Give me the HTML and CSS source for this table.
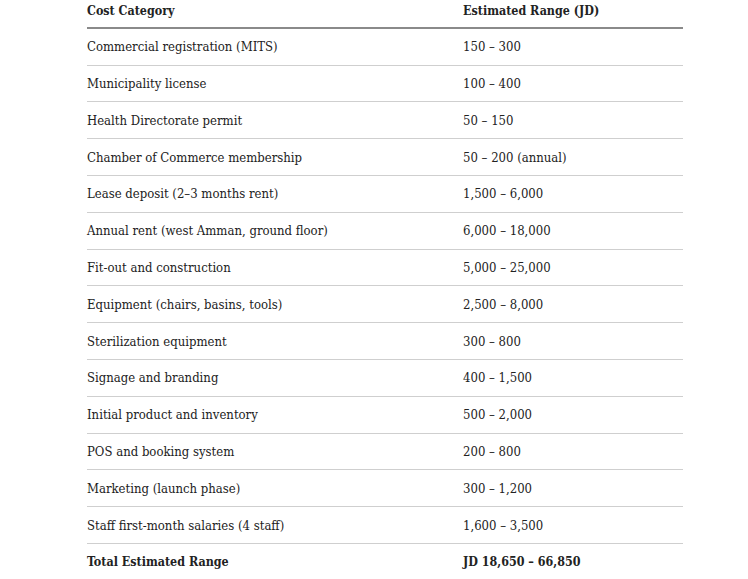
FILE: index.html
```html
<!DOCTYPE html>
<html>
<head>
<meta charset="utf-8">
<link rel="stylesheet" href="styles.css">
</head>
<body>
<table class="costs">
  <thead>
    <tr><th class="cat">Cost Category</th><th>Estimated Range (JD)</th></tr>
  </thead>
  <tbody>
    <tr><td class="cat">Commercial registration (MITS)</td><td>150 – 300</td></tr>
    <tr><td class="cat">Municipality license</td><td>100 – 400</td></tr>
    <tr><td class="cat">Health Directorate permit</td><td>50 – 150</td></tr>
    <tr><td class="cat">Chamber of Commerce membership</td><td>50 – 200 (annual)</td></tr>
    <tr><td class="cat">Lease deposit (2–3 months rent)</td><td>1,500 – 6,000</td></tr>
    <tr><td class="cat">Annual rent (west Amman, ground floor)</td><td>6,000 – 18,000</td></tr>
    <tr><td class="cat">Fit-out and construction</td><td>5,000 – 25,000</td></tr>
    <tr><td class="cat">Equipment (chairs, basins, tools)</td><td>2,500 – 8,000</td></tr>
    <tr><td class="cat">Sterilization equipment</td><td>300 – 800</td></tr>
    <tr><td class="cat">Signage and branding</td><td>400 – 1,500</td></tr>
    <tr><td class="cat">Initial product and inventory</td><td>500 – 2,000</td></tr>
    <tr><td class="cat">POS and booking system</td><td>200 – 800</td></tr>
    <tr><td class="cat">Marketing (launch phase)</td><td>300 – 1,200</td></tr>
    <tr><td class="cat">Staff first-month salaries (4 staff)</td><td>1,600 – 3,500</td></tr>
    <tr class="total"><td class="cat">Total Estimated Range</td><td>JD 18,650 – 66,850</td></tr>
  </tbody>
</table>
</body>
</html>
```
FILE: styles.css
```css
html, body {
  margin: 0;
  padding: 0;
  background: #ffffff;
}
body {
  font-family: "DejaVu Serif Condensed", "DejaVu Serif", "Liberation Serif", serif;
  font-stretch: condensed;
  font-size: 13px;
  color: #222222;
}
.costs {
  border-collapse: collapse;
  width: 596px;
  margin: -8px 0 0 87px;
}
.costs th, .costs td {
  text-align: left;
  padding: 10.5px 0 9.5px;
  line-height: 15.8px;
  vertical-align: middle;
}
.costs .cat {
  width: 376px;
}
.costs th {
  font-weight: bold;
  font-size: 12.4px;
  border-bottom: 2px solid #8a8a8a;
  padding-bottom: 8.5px;
}
.costs td {
  border-bottom: 1px solid #cfcfcf;
}
.costs tr.total td {
  font-weight: bold;
  font-size: 12.4px;
  border-bottom: none;
}
```
